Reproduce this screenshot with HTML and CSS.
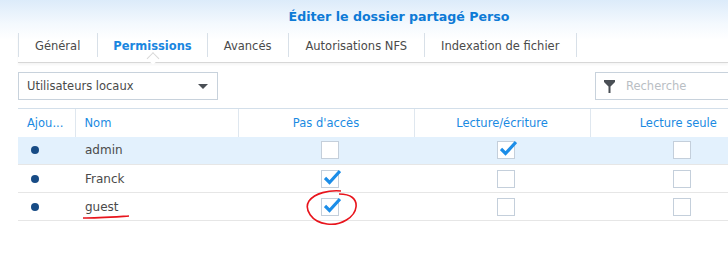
FILE: index.html
```html
<!DOCTYPE html>
<html lang="fr">
<head>
    <meta charset="UTF-8">
    <title>Éditer le dossier partagé Perso</title>
    <link rel="stylesheet" href="styles.css">
</head>
<body>
    <div class="window">
        <h1 class="window-title">Éditer le dossier partagé Perso</h1>

        <div class="tabs">
            <div class="tab">Général</div>
            <div class="tab active">Permissions</div>
            <div class="tab">Avancés</div>
            <div class="tab">Autorisations NFS</div>
            <div class="tab">Indexation de fichier</div>
        </div>

        <div class="toolbar">
            <div class="select">
                <span>Utilisateurs locaux</span>
                <span class="caret"></span>
            </div>
            <div class="search">
                <svg class="filter-icon" width="11" height="13" viewBox="0 0 11 13">
                    <path d="M0 0 H11 V2 L6.5 6.5 V13 H4.5 V6.5 L0 2 Z" fill="#4a4f55"/>
                </svg>
                <span class="placeholder">Recherche</span>
            </div>
        </div>

        <table class="perm-table">
            <colgroup>
                <col class="c-add">
                <col class="c-name">
                <col class="c-perm">
                <col class="c-perm">
                <col class="c-perm">
            </colgroup>
            <thead>
                <tr>
                    <th class="left">Ajou...</th>
                    <th class="left">Nom</th>
                    <th>Pas d'accès</th>
                    <th>Lecture/écriture</th>
                    <th>Lecture seule</th>
                </tr>
            </thead>
            <tbody>
                <tr class="selected">
                    <td><span class="dot"></span></td>
                    <td class="name">admin</td>
                    <td class="check"><span class="box"></span></td>
                    <td class="check"><span class="box checked"></span></td>
                    <td class="check"><span class="box"></span></td>
                </tr>
                <tr>
                    <td><span class="dot"></span></td>
                    <td class="name">Franck</td>
                    <td class="check"><span class="box checked"></span></td>
                    <td class="check"><span class="box"></span></td>
                    <td class="check"><span class="box"></span></td>
                </tr>
                <tr>
                    <td><span class="dot"></span></td>
                    <td class="name"><span class="underlined">guest</span></td>
                    <td class="check circled"><span class="box checked"></span></td>
                    <td class="check"><span class="box"></span></td>
                    <td class="check"><span class="box"></span></td>
                </tr>
            </tbody>
        </table>
    </div>
</body>
</html>
```

FILE: styles.css
```css
* {
    margin: 0;
    padding: 0;
    box-sizing: border-box;
}

body {
    width: 728px;
    height: 267px;
    overflow: hidden;
    background: #fff;
    font-family: 'DejaVu Sans', Verdana, sans-serif;
    font-size: 11.5px;
    color: #4a4a4a;
}

.window {
    background: linear-gradient(#dcebfa 0px, #f4f9fe 24px, #ffffff 40px);
    height: 267px;
}

.window-title {
    height: 33px;
    line-height: 34px;
    text-align: center;
    font-size: 12.6px;
    font-weight: bold;
    color: #0d7ad6;
    padding-left: 70px;
}

/* Tabs */
.tabs {
    display: flex;
    margin-left: 18px;
    height: 30px;
    border-bottom: 1px solid #d7d7d7;
    box-shadow: 0 2px 2px rgba(0, 0, 0, 0.04);
    align-items: flex-start;
}

.tab {
    height: 24px;
    line-height: 26px;
    padding: 0 17px 0 16px;
    border-left: 1px solid #d8e0e8;
    color: #4a4a4a;
    position: relative;
}

.tab:last-child {
    border-right: 1px solid #d8e0e8;
}

.tab.active {
    color: #1a86e0;
    font-weight: bold;
    padding: 0 15px;
}

/* little notch under the active tab */
.tab.active::after {
    content: '';
    position: absolute;
    left: 50%;
    bottom: -6px;
    width: 8px;
    height: 8px;
    background: #fff;
    border-left: 1px solid #d7d7d7;
    border-top: 1px solid #d7d7d7;
    transform: translateX(-50%) rotate(45deg);
}

/* Toolbar */
.toolbar {
    display: flex;
    justify-content: space-between;
    margin: 9px 0 0 18px;
}

.select {
    width: 200px;
    height: 28px;
    border: 1px solid #c8d2dc;
    display: flex;
    align-items: center;
    justify-content: space-between;
    padding: 0 8px 0 8px;
    color: #4a4a4a;
}

.caret {
    width: 0;
    height: 0;
    border-left: 5px solid transparent;
    border-right: 5px solid transparent;
    border-top: 5px solid #4a4f55;
    margin-right: 1px;
}

.search {
    width: 150px;
    height: 28px;
    border: 1px solid #c8d2dc;
    border-right: none;
    display: flex;
    align-items: center;
    padding-left: 8px;
    margin-right: -17px;
}

.filter-icon {
    margin-right: 11px;
}

.placeholder {
    color: #b9bec4;
}

/* Table */
.perm-table {
    margin: 8px 0 0 18px;
    width: 748px;
    table-layout: fixed;
    border-collapse: collapse;
}

.c-add { width: 57px; }
.c-name { width: 163px; }
.c-perm { width: 176px; }

.perm-table th {
    height: 28px;
    font-weight: normal;
    color: #1a8ae2;
    border-top: 1px solid #d3dfea;
    border-left: 1px solid #dfe7ef;
    text-align: center;
    padding: 0;
}

.perm-table th:first-child {
    border-left: none;
}

.perm-table th.left {
    text-align: left;
    padding-left: 9px;
}

.perm-table td {
    height: 28px;
    border-bottom: 1px solid #e6e6e6;
    padding: 0;
}

.perm-table tr.selected td {
    background: #e3f1fd;
}

.dot {
    display: block;
    width: 8px;
    height: 8px;
    border-radius: 50%;
    background: #174b85;
    margin-left: 13px;
}

.name {
    padding-left: 10px !important;
    color: #4a4a4a;
    font-size: 12px;
}

.check {
    text-align: center;
    padding-left: 8px !important;
}

.box {
    display: inline-block;
    width: 18px;
    height: 18px;
    border: 1px solid #c4cfdb;
    background: #fff;
    vertical-align: middle;
    position: relative;
}

.box.checked::after {
    content: '';
    position: absolute;
    left: 2px;
    top: -2px;
    width: 17px;
    height: 16px;
    background: url("data:image/svg+xml;utf8,<svg xmlns='http://www.w3.org/2000/svg' width='17' height='16' viewBox='0 0 17 16'><path d='M1 9 L5.5 13.5 L16 2' fill='none' stroke='%231b8de8' stroke-width='3.2'/></svg>") no-repeat;
}

/* red hand annotations */
.underlined {
    position: relative;
}

.underlined::after {
    content: '';
    position: absolute;
    left: -3px;
    top: 14px;
    width: 48px;
    height: 6px;
    background: url("data:image/svg+xml;utf8,<svg xmlns='http://www.w3.org/2000/svg' width='48' height='6'><path d='M1 4 C15 4 30 3 47 2' fill='none' stroke='%23e8141c' stroke-width='1.6'/></svg>") no-repeat;
}

.circled {
    position: relative;
}

.circled::before {
    content: '';
    position: absolute;
    left: 67px;
    top: -4px;
    width: 54px;
    height: 38px;
    background: url("data:image/svg+xml;utf8,<svg xmlns='http://www.w3.org/2000/svg' width='54' height='38'><path d='M36 2 C24 1 10 4 4 12 C-1 20 6 33 22 35 C36 37 50 28 51 18 C52 10 46 5 34 5' fill='none' stroke='%23e8141c' stroke-width='1.6'/></svg>") no-repeat;
}
```
